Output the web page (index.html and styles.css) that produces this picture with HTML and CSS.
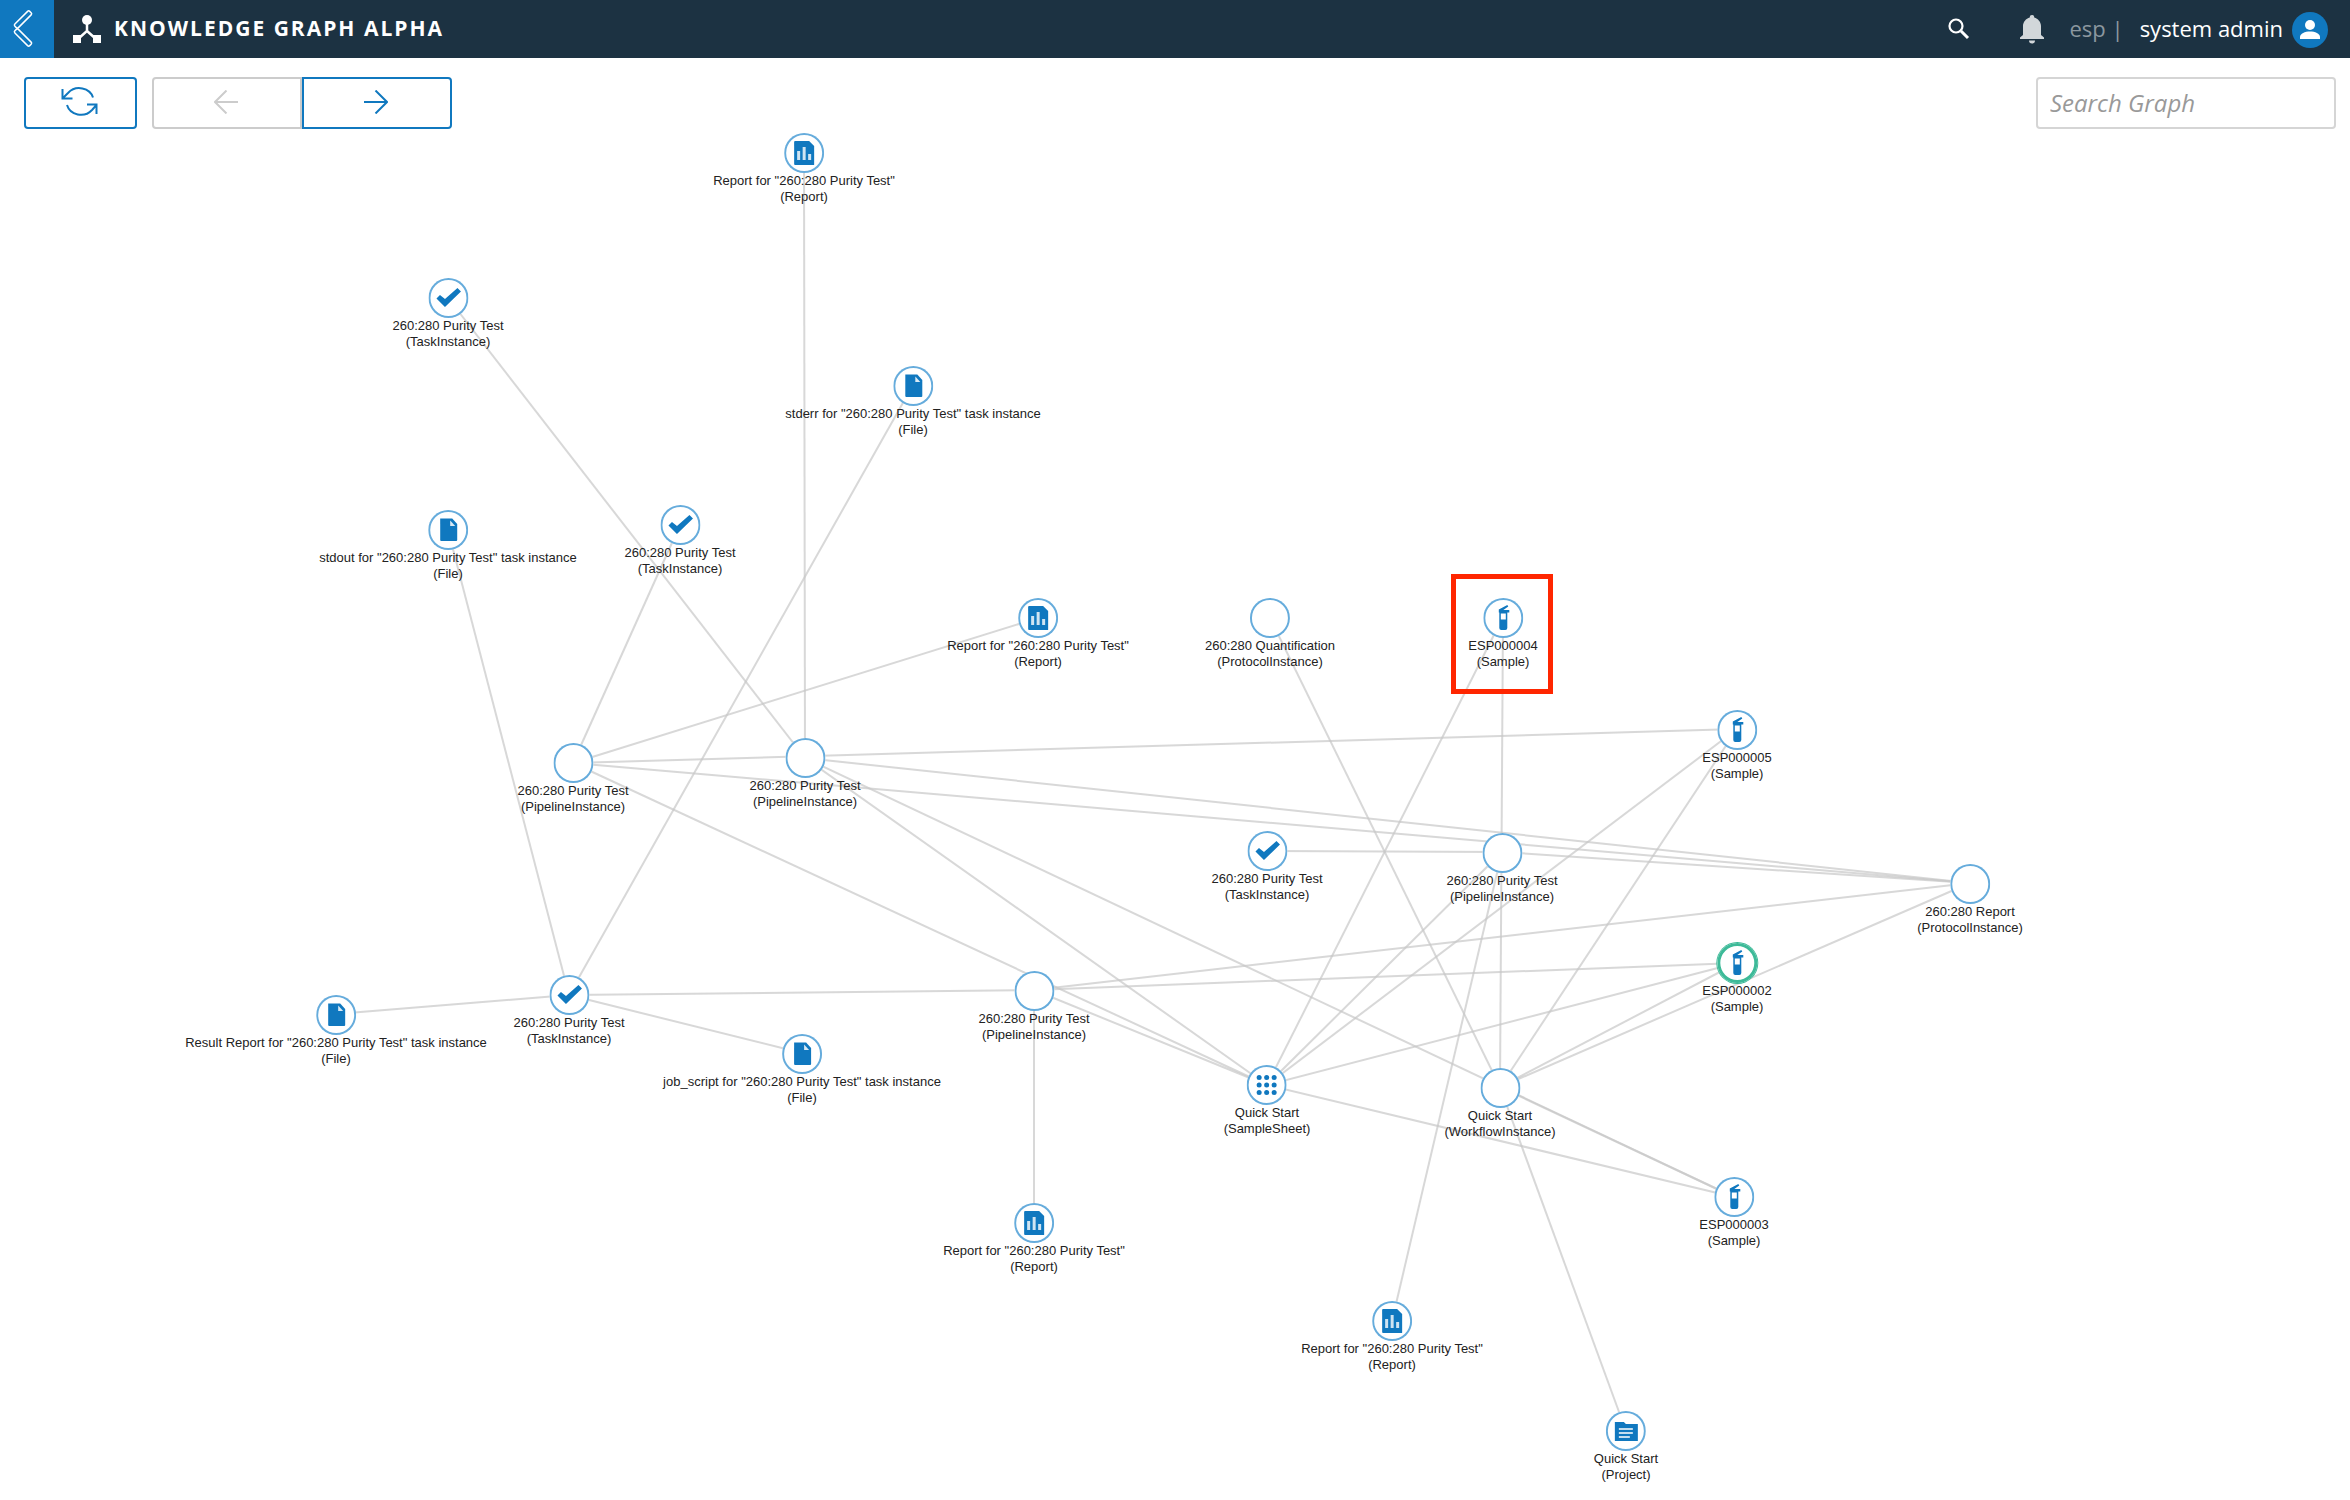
FILE: index.html
```html
<!DOCTYPE html>
<html lang="en">
<head>
<meta charset="utf-8">
<title>Knowledge Graph Alpha</title>
<meta name="viewport" content="width=device-width, initial-scale=1">
<link rel="stylesheet" href="styles.css">
</head>
<body>
<svg class="sprite" aria-hidden="true">
  <symbol id="icon-report" viewBox="0 0 40 40"><path d="M11 8h14l5 5v19H11a1 1 0 0 1-1-1V9a1 1 0 0 1 1-1z"/><path fill="#cfe4f2" d="M13 18h3v9h-3zM18.500 14h3v13h-3zM24 21h3v6h-3z"/></symbol>
  <symbol id="icon-file" viewBox="0 0 40 40"><path d="M12 8.500h12l5 5.500v16a1 1 0 0 1-1 1H13a1 1 0 0 1-1-1V9.500z"/><path fill="#d9eaf5" d="M22 10.500v5.500h5z"/></symbol>
  <symbol id="icon-check" viewBox="0 0 40 40"><path d="M8 20.500l3.500-3.500 5 4L29 10l3.500 3.500L16.500 29z"/></symbol>
  <symbol id="icon-sample" viewBox="0 0 40 40"><path d="M15.500 11.500l8.500-4.500 1 1.500-5 3.500h6v2.500h-2V30a2 2 0 0 1-2 2h-4a2 2 0 0 1-2-2V14.500h-.500z"/><path fill="#fff" d="M17.500 15.500h5v6h-5z"/></symbol>
  <symbol id="icon-sheet" viewBox="0 0 40 40"><g><circle cx="12.500" cy="12.500" r="2.500"/><circle cx="20" cy="12.500" r="2.500"/><circle cx="27.500" cy="12.500" r="2.500"/><circle cx="12.500" cy="20" r="2.500"/><circle cx="20" cy="20" r="2.500"/><circle cx="27.500" cy="20" r="2.500"/><circle cx="12.500" cy="27.500" r="2.500"/><circle cx="20" cy="27.500" r="2.500"/><circle cx="27.500" cy="27.500" r="2.500"/></g></symbol>
  <symbol id="icon-project" viewBox="0 0 40 40"><path d="M9 11h9l2 2h12v17H9z"/><path stroke="#fff" stroke-width="1.500" d="M13 18h14M13 22h14M13 26h11"/></symbol>
</svg>

<header class="topbar">
  <button class="back" type="button" aria-label="Back">
    <svg width="24" height="42" viewBox="0 0 24 42" fill="none" stroke="#fff" stroke-width="1.500"><rect x="-2" y="-2.500" width="21" height="5" rx="1.500" transform="translate(6 17.500) rotate(-45)"/><rect x="-2" y="-2.500" width="21" height="5" rx="1.500" transform="translate(6 23.500) rotate(45)"/></svg>
  </button>
  <svg class="brand-icon" width="28" height="28" viewBox="0 0 28 28" aria-hidden="true"><circle cx="14" cy="5" r="5" fill="#fff"/><path d="M14 8v8L5 24M14 16l9 8" stroke="#fff" stroke-width="2.500" fill="none"/><path d="M0 20h8v8H0zM20 20h8v8h-8z" fill="#fff"/></svg>
  <h1 class="title">KNOWLEDGE GRAPH ALPHA</h1>
  <div class="tools">
    <button class="tool" type="button" aria-label="Search">
      <svg width="22" height="22" viewBox="0 0 22 22" fill="none" stroke="#fff"><circle cx="8" cy="8" r="6.500" stroke-width="2.200"/><path d="M13 13l7 7" stroke-width="3"/></svg>
    </button>
    <button class="tool bell" type="button" aria-label="Notifications">
      <svg width="24" height="29" viewBox="0 0 24 29" fill="#d2d7da"><path d="M12 0a2.200 2.200 0 0 1 2.200 2.500C18 3.500 21 7 21 11v9l3 2.500V24H0v-1.500L3 20v-9c0-4 3-7.500 6.800-8.500A2.200 2.200 0 0 1 12 0zM9 25.500h6a3 3 0 0 1-6 0z"/></svg>
    </button>
    <span class="tenant">esp |</span>
    <a class="user" href="#user"><span>system admin</span>
      <svg width="38" height="38" viewBox="0 0 38 38" aria-hidden="true"><circle cx="19" cy="20" r="18" fill="#1078bf"/><circle cx="19" cy="15" r="5" fill="#fff"/><path d="M9 29v-2c0-3.500 5-5.500 10-5.500s10 2 10 5.500v2z" fill="#fff"/></svg>
    </a>
  </div>
</header>

<main class="page">
  <div class="toolbar">
    <button class="btn refresh" type="button" aria-label="Refresh">
      <svg width="38" height="32" viewBox="0 0 38 32" fill="none" stroke="currentColor" stroke-width="2"><path d="M32 11.500C29 2 15 -1.500 7 7L2 12M1.500 3v9.500H11.500M6 19c3 10 17 13.500 25 5L35 19.500M26 18.500h9.500V28"/></svg>
    </button>
    <div class="history">
      <button class="btn step" type="button" aria-label="Previous" disabled>
        <svg width="24" height="24" viewBox="0 0 24 24" fill="none" stroke="currentColor" stroke-width="2"><path d="M24 12H1M12.500 .5L1 12l11.500 11.500"/></svg>
      </button>
      <button class="btn step" type="button" aria-label="Next">
        <svg width="24" height="24" viewBox="0 0 24 24" fill="none" stroke="currentColor" stroke-width="2"><path d="M0 12h23M11.500 .5L23 12 11.500 23.500"/></svg>
      </button>
    </div>
    <input class="search" type="search" placeholder="Search Graph" aria-label="Search Graph">
  </div>

  <section class="graph" aria-label="Knowledge graph">
    <svg class="edges" aria-hidden="true">
      <line x1="804" y1="24" x2="805" y2="629"/>
      <line x1="448" y1="169" x2="805" y2="629"/>
      <line x1="913" y1="256" x2="569" y2="866"/>
      <line x1="448" y1="401" x2="569" y2="866"/>
      <line x1="680" y1="396" x2="573" y2="634"/>
      <line x1="1038" y1="489" x2="573" y2="634"/>
      <line x1="573" y1="634" x2="1737" y2="600"/>
      <line x1="573" y1="634" x2="1970" y2="754"/>
      <line x1="573" y1="634" x2="1267" y2="956"/>
      <line x1="805" y1="629" x2="1970" y2="754"/>
      <line x1="805" y1="629" x2="1267" y2="956"/>
      <line x1="805" y1="629" x2="1734" y2="1068"/>
      <line x1="1270" y1="489" x2="1500" y2="958"/>
      <line x1="1503" y1="488" x2="1267" y2="956"/>
      <line x1="1503" y1="488" x2="1500" y2="958"/>
      <line x1="1267" y1="722" x2="1502" y2="723"/>
      <line x1="1502" y1="723" x2="1970" y2="754"/>
      <line x1="1502" y1="723" x2="1267" y2="956"/>
      <line x1="1502" y1="723" x2="1392" y2="1192"/>
      <line x1="1737" y1="600" x2="1267" y2="956"/>
      <line x1="1737" y1="600" x2="1500" y2="958"/>
      <line x1="1737" y1="834" x2="1034" y2="861"/>
      <line x1="1737" y1="834" x2="1267" y2="956"/>
      <line x1="1737" y1="834" x2="1500" y2="958"/>
      <line x1="1970" y1="754" x2="1034" y2="861"/>
      <line x1="1970" y1="754" x2="1500" y2="958"/>
      <line x1="1734" y1="1068" x2="1267" y2="956"/>
      <line x1="1734" y1="1068" x2="1500" y2="958"/>
      <line x1="1500" y1="958" x2="1626" y2="1302"/>
      <line x1="1034" y1="861" x2="1267" y2="956"/>
      <line x1="1034" y1="861" x2="569" y2="866"/>
      <line x1="1034" y1="861" x2="1034" y2="1093"/>
      <line x1="569" y1="866" x2="336" y2="885"/>
      <line x1="569" y1="866" x2="802" y2="924"/>
    </svg>

    <div class="node" style="left:804px;top:24px"><svg class="dot"><use href="#icon-report"/></svg><span>Report for "260:280 Purity Test"</span><span>(Report)</span></div>
    <div class="node" style="left:448px;top:169px"><svg class="dot"><use href="#icon-check"/></svg><span>260:280 Purity Test</span><span>(TaskInstance)</span></div>
    <div class="node" style="left:913px;top:257px"><svg class="dot"><use href="#icon-file"/></svg><span>stderr for "260:280 Purity Test" task instance</span><span>(File)</span></div>
    <div class="node" style="left:448px;top:401px"><svg class="dot"><use href="#icon-file"/></svg><span>stdout for "260:280 Purity Test" task instance</span><span>(File)</span></div>
    <div class="node" style="left:680px;top:396px"><svg class="dot"><use href="#icon-check"/></svg><span>260:280 Purity Test</span><span>(TaskInstance)</span></div>
    <div class="node" style="left:1038px;top:489px"><svg class="dot"><use href="#icon-report"/></svg><span>Report for "260:280 Purity Test"</span><span>(Report)</span></div>
    <div class="node" style="left:1270px;top:489px"><svg class="dot"></svg><span>260:280 Quantification</span><span>(ProtocolInstance)</span></div>
    <div class="node" style="left:1503px;top:489px"><svg class="dot"><use href="#icon-sample"/></svg><span>ESP000004</span><span>(Sample)</span></div>
    <div class="node" style="left:1737px;top:601px"><svg class="dot"><use href="#icon-sample"/></svg><span>ESP000005</span><span>(Sample)</span></div>
    <div class="node" style="left:573px;top:634px"><svg class="dot"></svg><span>260:280 Purity Test</span><span>(PipelineInstance)</span></div>
    <div class="node" style="left:805px;top:629px"><svg class="dot"></svg><span>260:280 Purity Test</span><span>(PipelineInstance)</span></div>
    <div class="node" style="left:1267px;top:722px"><svg class="dot"><use href="#icon-check"/></svg><span>260:280 Purity Test</span><span>(TaskInstance)</span></div>
    <div class="node" style="left:1502px;top:724px"><svg class="dot"></svg><span>260:280 Purity Test</span><span>(PipelineInstance)</span></div>
    <div class="node" style="left:1970px;top:755px"><svg class="dot"></svg><span>260:280 Report</span><span>(ProtocolInstance)</span></div>
    <div class="node selected" style="left:1737px;top:834px"><svg class="dot"><use href="#icon-sample"/></svg><span>ESP000002</span><span>(Sample)</span></div>
    <div class="node" style="left:1034px;top:862px"><svg class="dot"></svg><span>260:280 Purity Test</span><span>(PipelineInstance)</span></div>
    <div class="node" style="left:569px;top:866px"><svg class="dot"><use href="#icon-check"/></svg><span>260:280 Purity Test</span><span>(TaskInstance)</span></div>
    <div class="node" style="left:336px;top:886px"><svg class="dot"><use href="#icon-file"/></svg><span>Result Report for "260:280 Purity Test" task instance</span><span>(File)</span></div>
    <div class="node" style="left:802px;top:925px"><svg class="dot"><use href="#icon-file"/></svg><span>job_script for "260:280 Purity Test" task instance</span><span>(File)</span></div>
    <div class="node" style="left:1267px;top:956px"><svg class="dot"><use href="#icon-sheet"/></svg><span>Quick Start</span><span>(SampleSheet)</span></div>
    <div class="node" style="left:1500px;top:959px"><svg class="dot"></svg><span>Quick Start</span><span>(WorkflowInstance)</span></div>
    <div class="node" style="left:1734px;top:1068px"><svg class="dot"><use href="#icon-sample"/></svg><span>ESP000003</span><span>(Sample)</span></div>
    <div class="node" style="left:1034px;top:1094px"><svg class="dot"><use href="#icon-report"/></svg><span>Report for "260:280 Purity Test"</span><span>(Report)</span></div>
    <div class="node" style="left:1392px;top:1192px"><svg class="dot"><use href="#icon-report"/></svg><span>Report for "260:280 Purity Test"</span><span>(Report)</span></div>
    <div class="node" style="left:1626px;top:1302px"><svg class="dot"><use href="#icon-project"/></svg><span>Quick Start</span><span>(Project)</span></div>

    <div class="marker" style="left:1451px;top:445px"></div>
  </section>
</main>
</body>
</html>
```
FILE: styles.css
```css
* { box-sizing: border-box; }

body {
  margin: 0;
  min-height: 100vh;
  display: flex;
  flex-direction: column;
  background: #fff;
  font-family: "Open Sans", "Noto Sans", sans-serif;
}

button {
  padding: 0;
  border: 0;
  background: none;
  font: inherit;
  cursor: pointer;
}

svg { display: block; }
.sprite { position: absolute; width: 0; height: 0; }

/* Top bar */
.topbar {
  height: 58px;
  display: flex;
  align-items: center;
  background: #1c3242;
  color: #fff;
}
.back {
  width: 54px;
  height: 58px;
  display: flex;
  align-items: center;
  justify-content: center;
  padding-right: 8px;
  background: #1078bf;
}
.brand-icon { margin-left: 19px; }
.title {
  margin: 0 0 0 13px;
  padding-bottom: 2px;
  font-size: 21px;
  line-height: 30px;
  font-weight: 700;
  letter-spacing: 2px;
}
.tools {
  margin-left: auto;
  padding-right: 21px;
  display: flex;
  align-items: center;
  font-size: 22px;
  line-height: 30px;
}
.bell { margin-left: 50px; }
.tenant { margin-left: 26px; padding-bottom: 2px; color: #8b979f; }
.user {
  margin-left: 16px;
  display: flex;
  align-items: center;
  gap: 8px;
  color: #fff;
  text-decoration: none;
}
.user span { padding-bottom: 2px; }

/* Toolbar */
.page {
  flex: 1;
  display: flex;
  flex-direction: column;
}
.toolbar {
  display: flex;
  padding: 19px 14px 0 24px;
}
.btn {
  height: 52px;
  display: flex;
  align-items: center;
  justify-content: center;
  padding: 0 2px 2px 0;
  border: 2px solid #1078bf;
  border-radius: 4px;
  color: #1078bf;
}
.btn:disabled { border-color: #ccc; color: #ccc; }
.refresh { width: 113px; }
.history { display: flex; margin-left: 15px; }
.step { width: 150px; }
.step:first-child { border-radius: 4px 0 0 4px; }
.step:last-child { border-radius: 0 4px 4px 0; }
.search {
  width: 300px;
  height: 52px;
  margin-left: auto;
  padding: 0 12px 2px;
  border: 2px solid #d5d5d5;
  border-radius: 4px;
  background: #fff;
  font: 24px "Open Sans", "Noto Sans", sans-serif;
  appearance: none;
}
.search::placeholder { color: #999; font-style: italic; opacity: 1; }

/* Graph canvas */
.graph {
  flex: 1;
  position: relative;
  overflow: hidden;
  min-height: 1360px;
}
.edges {
  position: absolute;
  inset: 0;
  width: 100%;
  height: 100%;
}
.edges line { stroke: #c8c8c8; stroke-width: 2; opacity: .7; }

/* A node is anchored on the centre of its circle */
.node {
  position: absolute;
  display: flex;
  flex-direction: column;
  align-items: center;
  transform: translate(-50%, -20px);
  color: #222;
  font: 13px/16px "Liberation Sans", Arial, sans-serif;
  white-space: nowrap;
}
.dot {
  width: 40px;
  height: 40px;
  border-radius: 50%;
  background: #fff;
  box-shadow: inset 0 0 0 2px #66acdc;
  fill: #1078bf;
}
.selected .dot { box-shadow: inset 0 0 0 3px #3dba98, 0 0 0 1px #3dba98; }

.marker {
  position: absolute;
  width: 102px;
  height: 120px;
  border: 5px solid #ff2600;
}
```
